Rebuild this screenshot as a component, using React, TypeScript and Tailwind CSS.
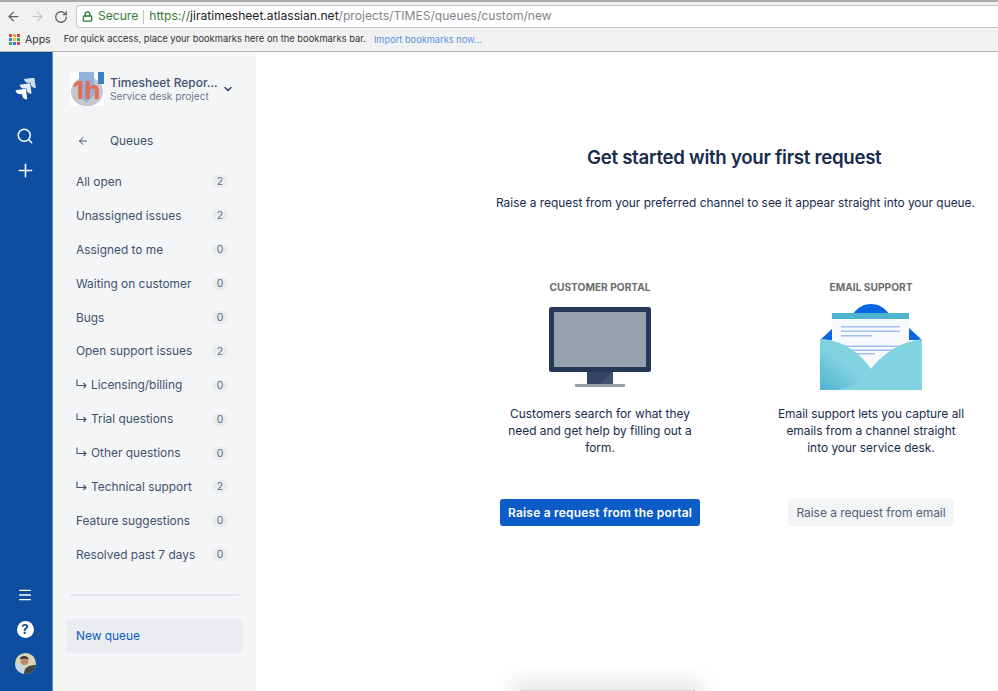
import { ArrowLeft, ChevronDown, Plus, Search, Menu, RotateCw, ArrowRight, Lock } from 'lucide-react'

const queues = [
    { name: 'All open', count: 2 },
    { name: 'Unassigned issues', count: 2 },
    { name: 'Assigned to me', count: 0 },
    { name: 'Waiting on customer', count: 0 },
    { name: 'Bugs', count: 0 },
    { name: 'Open support issues', count: 2 },
    { name: 'Licensing/billing', count: 0, child: true },
    { name: 'Trial questions', count: 0, child: true },
    { name: 'Other questions', count: 0, child: true },
    { name: 'Technical support', count: 2, child: true },
    { name: 'Feature suggestions', count: 0 },
    { name: 'Resolved past 7 days', count: 0 },
]

const appDots = ['#d8473a', '#e8a33a', '#d8473a', '#3b78e7', '#e8c33a', '#3aa757', '#3aa757', '#3b78e7', '#d8473a']

function BrowserBar() {
    return (
        <div className="h-[52px] shrink-0 bg-[#f1f1f1] border-b border-[#b8b8b8] border-t-2 border-t-[#a9a9a9]">
            <div className="h-[27px] pt-[2px] flex items-center">
                <ArrowLeft size={15} strokeWidth={2} className="ml-[6px] text-[#5f6368]" />
                <ArrowRight size={15} strokeWidth={2} className="ml-[9px] text-[#c6c6c6]" />
                <RotateCw size={14} strokeWidth={2.2} className="ml-[9px] text-[#5f6368]" />
                <div className="ml-[8px] flex-1 h-[23px] bg-white border border-[#c8c8c8] rounded-l-[4px] border-r-0 flex items-center text-[12.1px]">
                    <Lock size={11} strokeWidth={3} className="ml-[5px] text-[#2e7d32]" />
                    <span className="ml-[5px] text-[#2e7d32]">Secure</span>
                    <span className="ml-[5px] h-[14px] w-px bg-[#c4c4c4]" />
                    <span className="ml-[5px] text-[#2e7d32]">https://</span>
                    <span className="text-[#202124]">jiratimesheet.atlassian.net</span>
                    <span className="text-[#80868b]">/projects/TIMES/queues/custom/new</span>
                </div>
            </div>
            <div className="h-[21px] flex items-center text-[9.35px] text-[#333]">
                <div className="ml-[9px] grid grid-cols-3 gap-[1px] w-[11px]">
                    {appDots.map((c, i) => (
                        <span key={i} className="w-[3px] h-[3px]" style={{ backgroundColor: c }} />
                    ))}
                </div>
                <span className="ml-[5px] text-[10.5px]">Apps</span>
                <span className="ml-[13px]">For quick access, place your bookmarks here on the bookmarks bar.</span>
                <span className="ml-[8px] text-[#5c93e0] text-[9.25px]">Import bookmarks now...</span>
            </div>
        </div>
    )
}

function JiraLogo() {
    const chevron = 'M11.5 2H22V12.5A4.5 4.5 0 0 1 17.5 8V6.5H16A4.5 4.5 0 0 1 11.5 2Z'
    return (
        <svg width="24" height="24" viewBox="0 0 24 24" fill="#fff" className="-ml-[2px]">
            <g transform="rotate(-8 12 12) translate(1 -1)">
                <path d={chevron} opacity="0.8" />
                <path d={chevron} transform="translate(-5 5)" opacity="0.9" />
                <path d={chevron} transform="translate(-10 10)" />
            </g>
        </svg>
    )
}

function Avatar() {
    return (
        <svg width="21" height="21" viewBox="0 0 21 21" className="rounded-full">
            <rect width="21" height="21" fill="#d9d6b4" />
            <rect x="0" y="11" width="9" height="10" fill="#c9d8e0" />
            <path d="M9 21 C9 14 14 12 21 12 L21 21 Z" fill="#44454a" />
            <circle cx="9.5" cy="8" r="4" fill="#b98b70" />
            <path d="M4.5 6 C6 2 12 2 14 6 L10 5.5 Z" fill="#3a2c28" />
        </svg>
    )
}

function NavRail() {
    return (
        <div className="w-[53px] shrink-0 bg-[#0e4ea0] border-r border-[#5f8fce] flex flex-col items-center text-white">
            <div className="mt-[26px]"><JiraLogo /></div>
            <Search size={18} strokeWidth={2} className="mt-[25px] -ml-[2px]" />
            <Plus size={21} strokeWidth={1.8} className="mt-[15px] -ml-[2px]" />
            <div className="flex-1" />
            <Menu size={16} strokeWidth={2} className="mb-[18px] -ml-[2px]" />
            <div className="w-[17px] h-[17px] -ml-[2px] rounded-full bg-white text-[#0e4ea0] text-[13px] font-bold flex items-center justify-center mb-[15px]">?</div>
            <div className="mb-[17px] h-[21px] -ml-[2px]"><Avatar /></div>
        </div>
    )
}

function ProjectLogo() {
    return (
        <div className="relative w-[34px] h-[34px] bg-white overflow-hidden">
            <div className="absolute left-[1px] top-[5px] w-[32px] h-[29px] rounded-full bg-[#c4c8cc]" />
            <div className="absolute left-[9px] top-0 w-[15px] h-[31px] bg-[#8fb3da] [clip-path:polygon(0_0,100%_0,100%_75%,50%_100%,0_75%)]" />
            <div className="absolute right-0 top-0 w-[6px] h-[12px] bg-[#3f7fc4]" />
            <span className="absolute left-[3px] top-[5px] text-[25px] leading-[27px] font-extrabold text-[#e0705a] tracking-[0.5px]">1h</span>
        </div>
    )
}

function QueueRow({ name, count, child }: { name: string; count: number; child?: boolean }) {
    return (
        <div className="h-[33.9px] flex items-center justify-between pl-[23px] pr-[28px] text-[11.9px] text-[#42526e]">
            <span className="flex items-center">
                {child && (
                    <svg width="11" height="10" viewBox="0 0 11 10" fill="none" stroke="#42526e" strokeWidth="1.1" className="mr-[4px] mb-[2px]">
                        <path d="M1 0.5V6.5H10M7.5 4L10 6.5L7.5 9" />
                    </svg>
                )}
                {name}
            </span>
            <span className="w-[16px] h-[13px] rounded-full bg-[#ebecf0] text-[10.5px] leading-[13px] text-center text-[#5e6c84]">{count}</span>
        </div>
    )
}

function QueueSidebar() {
    return (
        <div className="w-[203px] shrink-0 bg-[#f4f5f7] flex flex-col">
            <div className="mt-[20px] ml-[17px] flex items-center">
                <ProjectLogo />
                <div className="ml-[6px] w-[110px]">
                    <div className="text-[12px] leading-[14px] font-medium text-[#42526e] whitespace-nowrap">Timesheet Repor...</div>
                    <div className="text-[10.2px] leading-[12px] text-[#6b778c] whitespace-nowrap">Service desk project</div>
                </div>
                <ChevronDown size={12} strokeWidth={3} className="ml-[2px] text-[#344563]" />
            </div>
            <div className="mt-[25px] h-[20px] flex items-center text-[11.9px] text-[#42526e]">
                <ArrowLeft size={12} strokeWidth={2} className="ml-[24px]" />
                <span className="ml-[21px]">Queues</span>
            </div>
            <div className="mt-[14px]">
                {queues.map(q => (
                    <QueueRow key={q.name} name={q.name} count={q.count} child={q.child} />
                ))}
            </div>
            <div className="mt-[22px] mx-[17px] h-[2px] bg-[#e6e8ed]" />
            <div className="mt-[23px] ml-[13px] mr-[14px] h-[34px] rounded-[3px] bg-[#ebecf0] flex items-center pl-[10px] text-[11.9px] text-[#0b5cc7]">New queue</div>
        </div>
    )
}

function MonitorArt() {
    return (
        <svg width="102" height="82" viewBox="0 0 102 82" className="mt-[3px]">
            <rect x="0" y="0" width="102" height="65" rx="2.5" fill="#253858" />
            <rect x="5" y="5" width="92" height="55" fill="#97a0af" />
            <path d="M38 65H64V77H38Z" fill="#344563" />
            <path d="M50 77L64 65V77Z" fill="#42526e" />
            <rect x="26" y="77" width="50" height="3" fill="#97a0af" />
        </svg>
    )
}

function EnvelopeArt() {
    return (
        <svg width="102" height="88" viewBox="0 0 102 88">
            <defs>
                <linearGradient id="flapShade" x1="0" y1="1" x2="0.45" y2="0.45">
                    <stop offset="0" stopColor="#4fb3cf" />
                    <stop offset="1" stopColor="#82d3e2" />
                </linearGradient>
            </defs>
            <path d="M33 10C38 3 44 0 51 0C58 0 64 3 69 10Z" fill="#0c66e4" />
            <path d="M0 36L13 24V36ZM102 36L89 24V36Z" fill="#0c66e4" />
            <rect x="12" y="10" width="77" height="60" fill="#f7f9fd" />
            <rect x="12" y="9" width="77" height="6" fill="#4db3cf" />
            <rect x="21" y="22" width="59" height="1.5" fill="#a3bef0" />
            <rect x="21" y="26.5" width="59" height="1.5" fill="#a3bef0" />
            <rect x="21" y="31" width="31" height="1.5" fill="#a3bef0" />
            <rect x="21" y="41.5" width="59" height="1.5" fill="#a3bef0" />
            <rect x="21" y="45.5" width="59" height="1.5" fill="#a3bef0" />
            <rect x="37" y="49" width="18" height="1.5" fill="#a3bef0" />
            <path d="M0 35C18 36 36 44 51 65C62 50 80 38 102 35V86H0Z" fill="#82d3e2" />
            <path d="M0 35C18 36 36 44 51 65C42 78 28 86 12 86H0Z" fill="url(#flapShade)" />
        </svg>
    )
}

function Channel({ title, art, text, cta, primary }: { title: string; art: React.ReactNode; text: string[]; cta: string; primary?: boolean }) {
    return (
        <div className="w-[200px] flex flex-col items-center">
            <div className="text-[10.2px] leading-[14px] font-bold text-[#6b6b6b]">{title}</div>
            <div className="mt-[10px] h-[88px]">{art}</div>
            <div className="mt-[13px] h-[69px] text-[11.9px] leading-[17px] text-[#172b4d] text-center whitespace-nowrap">
                {text.map(l => <div key={l}>{l}</div>)}
            </div>
            <button className={primary
                ? 'mt-[25px] h-[27px] px-[8px] rounded-[3px] bg-[#0b5cc7] text-white text-[12px] font-semibold tracking-[0.2px] whitespace-nowrap'
                : 'mt-[25px] h-[27px] px-[8px] rounded-[3px] bg-[#f4f5f7] text-[#505f79] text-[12px] tracking-[-0.05px] whitespace-nowrap'}>
                {cta}
            </button>
        </div>
    )
}

export default function App() {
    return (
        <div className="w-[998px] h-[691px] flex flex-col overflow-hidden bg-white font-['Inter','Liberation_Sans',sans-serif]">
            <BrowserBar />
            <div className="flex-1 flex min-h-0">
                <NavRail />
                <QueueSidebar />
                <main className="relative flex-1 flex flex-col min-w-0">
                    <h1 className="mt-[93px] ml-[331px] text-[18.7px] leading-[26px] font-semibold text-[#172b4d] tracking-[-0.3px] whitespace-nowrap">Get started with your first request</h1>
                    <p className="mt-[23px] ml-[240px] text-[11.9px] leading-[18px] text-[#172b4d] whitespace-nowrap">Raise a request from your preferred channel to see it appear straight into your queue.</p>
                    <div className="mt-[68px] ml-[244px] flex gap-[71px]">
                        <Channel title="CUSTOMER PORTAL" art={<MonitorArt />} text={['Customers search for what they', 'need and get help by filling out a', 'form.']} cta="Raise a request from the portal" primary />
                        <Channel title="EMAIL SUPPORT" art={<EnvelopeArt />} text={['Email support lets you capture all', 'emails from a channel straight', 'into your service desk.']} cta="Raise a request from email" />
                    </div>
                    <div className="absolute left-[264px] bottom-0 w-[175px] h-[1px] bg-[#d8d8d8] shadow-[0_0_18px_9px_rgba(0,0,0,0.1)]" />
                </main>
            </div>
        </div>
    )
}
